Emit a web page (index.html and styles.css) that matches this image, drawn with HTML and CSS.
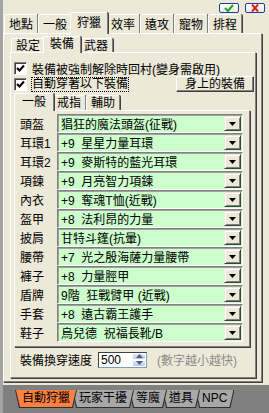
FILE: index.html
```html
<!DOCTYPE html>
<html lang="zh-Hant">
<head>
    <meta charset="UTF-8">
    <title>自動狩獵 - 裝備</title>
    <link rel="stylesheet" href="styles.css">
</head>
<body>
    <div class="app">
        <div class="titlebar">
            <button class="tb-btn">
                <svg width="10" height="8" viewBox="0 0 10 8"><path d="M1 4 L4 7 L9 1" fill="none" stroke="#21a121" stroke-width="2"/></svg>
            </button>
            <button class="tb-btn">
                <svg width="10" height="8" viewBox="0 0 10 8"><path d="M2 0.5 L8 7.5 M8 0.5 L2 7.5" fill="none" stroke="#e21b1b" stroke-width="2"/></svg>
            </button>
        </div>

        <div class="tabs top-tabs">
            <div class="tab">地點</div>
            <div class="tab">一般</div>
            <div class="tab on">狩獵</div>
            <div class="tab">效率</div>
            <div class="tab">遠攻</div>
            <div class="tab">寵物</div>
            <div class="tab">排程</div>
        </div>

        <div class="panel main-panel">
            <div class="tabs sub-tabs">
                <div class="tab">設定</div>
                <div class="tab on">裝備</div>
                <div class="tab">武器</div>
            </div>

            <div class="panel sub-panel">
                <div class="check-row">
                    <label class="check">
                        <span class="box"><svg width="9" height="9" viewBox="0 0 9 9"><path d="M1 4 L3.5 6.5 L8 1.5" fill="none" stroke="#000" stroke-width="2"/></svg></span>
                        <span>裝備被強制解除時回村(變身需啟用)</span>
                    </label>
                </div>
                <div class="check-row spread">
                    <label class="check">
                        <span class="box"><svg width="9" height="9" viewBox="0 0 9 9"><path d="M1 4 L3.5 6.5 L8 1.5" fill="none" stroke="#000" stroke-width="2"/></svg></span>
                        <span class="focus">自動穿著以下裝備</span>
                    </label>
                    <button class="btn">身上的裝備</button>
                </div>

                <div class="tabs eq-tabs">
                    <div class="tab on">一般</div>
                    <div class="tab">戒指</div>
                    <div class="tab">輔助</div>
                </div>

                <div class="panel eq-panel" id="eqList"></div>

                <div class="speed-row">
                    <span class="speed-label">裝備換穿速度</span>
                    <div class="spin">
                        <span class="spin-value">500</span>
                        <span class="spin-btns">
                            <span class="spin-btn"><svg width="7" height="4" viewBox="0 0 7 4"><path d="M0 4 L3.5 0 L7 4 Z" fill="#4d6185"/></svg></span>
                            <span class="spin-btn"><svg width="7" height="4" viewBox="0 0 7 4"><path d="M0 0 L3.5 4 L7 0 Z" fill="#4d6185"/></svg></span>
                        </span>
                    </div>
                    <span class="hint">(數字越小越快)</span>
                </div>
            </div>
        </div>

        <div class="sheet-bar">
            <div class="sheet on"><div class="sheet-in">自動狩獵</div></div>
            <div class="sheet"><div class="sheet-in">玩家干擾</div></div>
            <div class="sheet"><div class="sheet-in">等魔</div></div>
            <div class="sheet"><div class="sheet-in">道具</div></div>
            <div class="sheet"><div class="sheet-in">NPC</div></div>
        </div>
    </div>

    <script>
        const equipment = [
            ['頭盔', '猖狂的魔法頭盔(征戰)'],
            ['耳環1', '+9  星星力量耳環'],
            ['耳環2', '+9  麥斯特的藍光耳環'],
            ['項鍊', '+9  月亮智力項鍊'],
            ['內衣', '+9  奪魂T恤(近戰)'],
            ['盔甲', '+8  法利昂的力量'],
            ['披肩', '甘特斗篷(抗暈)'],
            ['腰帶', '+7  光之殷海薩力量腰帶'],
            ['褲子', '+8  力量脛甲'],
            ['盾牌', '9階  狂戰臂甲 (近戰)'],
            ['手套', '+8  遠古霸王護手'],
            ['鞋子', '烏兒德  祝福長靴/B']
        ];

        const list = document.getElementById('eqList');
        const arrow = '<svg width="7" height="4" viewBox="0 0 7 4"><path d="M0 0 L7 0 L3.5 4 Z" fill="#000"/></svg>';

        equipment.forEach(([slot, item]) => {
            const row = document.createElement('div');
            row.className = 'eq-row';
            row.innerHTML = `
                <span class="eq-label">${slot}</span>
                <div class="combo">
                    <span class="combo-text">${item}</span>
                    <span class="combo-btn">${arrow}</span>
                </div>
            `;
            list.appendChild(row);
        });
    </script>
</body>
</html>
```

FILE: styles.css
```css
* {
    margin: 0;
    padding: 0;
    box-sizing: border-box;
}

body {
    width: 269px;
    height: 413px;
    background: #ece9d8;
    font-family: 'Liberation Sans', 'Noto Sans CJK TC', sans-serif;
    font-size: 12px;
    color: #000;
    overflow: hidden;
}

.app {
    height: 413px;
    border-left: 3px solid #a4a4a4;
    display: flex;
    flex-direction: column;
}

/* top-right ok / cancel */
.titlebar {
    height: 12px;
    display: flex;
    justify-content: flex-end;
    align-items: flex-start;
    gap: 6px;
    padding: 3px 4px 0 0;
}

.tb-btn {
    width: 20px;
    height: 10px;
    border: 1px solid #1c3f95;
    border-radius: 2px;
    background: linear-gradient(#ffffff, #ecebe6);
    display: flex;
    align-items: center;
    justify-content: center;
}

/* classic tabs */
.tabs {
    display: flex;
    align-items: flex-end;
    position: relative;
    z-index: 1;
}

.tab {
    line-height: 14px;
    text-align: center;
    background: #ece9d8;
    border-top: 1px solid #fff;
    border-left: 1px solid #fff;
    border-right: 1px solid #808080;
    box-shadow: 1px 0 0 #404040;
    border-radius: 2px 2px 0 0;
    white-space: nowrap;
}

.tab.on {
    margin: 0 -2px -1px;
    position: relative;
    z-index: 2;
}

.top-tabs {
    height: 21px;
    padding-left: 1px;
}

.top-tabs .tab {
    height: 19px;
    padding: 3px 4px 0;
}

.top-tabs .tab.on {
    height: 22px;
    padding: 3px 6px 0;
}

.sub-tabs {
    height: 16px;
    padding-left: 1px;
}

.sub-tabs .tab {
    height: 14px;
    padding: 0 4px;
}

.sub-tabs .tab.on {
    height: 17px;
    padding: 0 6px 3px;
}

.eq-tabs {
    height: 17px;
    padding-left: 2px;
}

.eq-tabs .tab {
    height: 15px;
    padding: 0 4px;
}

.eq-tabs .tab.on {
    height: 18px;
    padding: 1px 7px 3px;
}

.panel {
    border-top: 1px solid #fff;
    border-left: 1px solid #fff;
    border-right: 1px solid #808080;
    border-bottom: 1px solid #808080;
    box-shadow: 1px 1px 0 #404040;
}

.main-panel {
    width: 259px;
    height: 349px;
    padding: 2px 5px 0 6px;
}

.sub-panel {
    height: 326px;
    padding: 8px 5px 0 3px;
}

.check-row {
    display: flex;
    align-items: center;
    height: 14px;
}

.check-row.spread {
    height: 18px;
    justify-content: space-between;
    margin-right: -4px;
}

.check {
    display: flex;
    align-items: center;
    gap: 5px;
    white-space: nowrap;
}

.box {
    width: 13px;
    height: 13px;
    background: #fff;
    border-top: 1px solid #808080;
    border-left: 1px solid #808080;
    border-right: 1px solid #fff;
    border-bottom: 1px solid #fff;
    box-shadow: inset 1px 1px 0 #404040;
    display: flex;
    align-items: center;
    justify-content: center;
}

.focus {
    outline: 1px dotted #000;
    line-height: 13px;
}

.btn {
    height: 16px;
    padding: 0 8px;
    font: inherit;
    background: #ece9d8;
    border-top: 1px solid #fff;
    border-left: 1px solid #fff;
    border-right: 1px solid #404040;
    border-bottom: 1px solid #404040;
    box-shadow: inset -1px -1px 0 #808080;
    line-height: 13px;
}

/* equipment list */
.eq-panel {
    width: 236px;
    height: 237px;
    padding: 3px 0 0 5px;
}

.eq-row {
    display: flex;
    align-items: center;
    height: 19px;
}

.eq-label {
    width: 37px;
    white-space: nowrap;
}

.combo {
    width: 186px;
    height: 19px;
    display: flex;
    align-items: center;
    justify-content: space-between;
    background: #ccffcc;
    border-top: 1px solid #808080;
    border-left: 1px solid #808080;
    border-right: 1px solid #fff;
    border-bottom: 1px solid #fff;
    box-shadow: inset 1px 1px 0 #a0a0a0;
    padding: 0 1px 0 3px;
}

.combo-text {
    white-space: pre;
    overflow: hidden;
}

.combo-btn {
    width: 17px;
    height: 15px;
    flex: none;
    display: flex;
    align-items: center;
    justify-content: center;
    background: #ece9d8;
    border-top: 1px solid #ece9d8;
    border-left: 1px solid #ece9d8;
    border-right: 1px solid #404040;
    border-bottom: 1px solid #404040;
    box-shadow: inset 1px 1px 0 #fff, inset -1px -1px 0 #808080;
}

/* speed row */
.speed-row {
    display: flex;
    align-items: center;
    margin-top: 5px;
    padding-left: 6px;
    height: 15px;
}

.speed-label {
    width: 78px;
    flex: none;
}

.spin {
    width: 49px;
    height: 16px;
    flex: none;
    display: flex;
    background: #fff;
    border: 1px solid #7f9db9;
    border-top-color: #404040;
    border-left-color: #404040;
}

.spin-value {
    flex: 1;
    padding-left: 2px;
    line-height: 14px;
}

.spin-btns {
    width: 14px;
    display: flex;
    flex-direction: column;
}

.spin-btn {
    flex: 1;
    display: flex;
    align-items: center;
    justify-content: center;
    background: linear-gradient(#dfe8fb, #b9cbf1);
    border: 1px solid #fff;
    border-radius: 2px;
}

.hint {
    margin-left: 10px;
    color: #8c8c8c;
    white-space: nowrap;
}

/* sheet tabs at the bottom */
.sheet-bar {
    margin-top: 3px;
    flex: 1;
    background: #808080;
    display: flex;
    align-items: flex-start;
    padding: 5px 0 0 12px;
}

.sheet {
    height: 18px;
    background: #303030;
    padding: 0 1px 1px;
    clip-path: polygon(0 0, 100% 0, calc(100% - 4px) 100%, 4px 100%);
    margin-right: -5px;
    position: relative;
}

.sheet-in {
    height: 17px;
    line-height: 16px;
    padding: 0 6px;
    background: #a8a8a8;
    clip-path: polygon(0 0, 100% 0, calc(100% - 4px) 100%, 4px 100%);
    white-space: nowrap;
}

.sheet.on .sheet-in {
    background: #ff8040;
}

.sheet:nth-child(1) { z-index: 6; }
.sheet:nth-child(2) { z-index: 5; }
.sheet:nth-child(3) { z-index: 4; }
.sheet:nth-child(4) { z-index: 3; }
.sheet:nth-child(5) { z-index: 2; }
```
